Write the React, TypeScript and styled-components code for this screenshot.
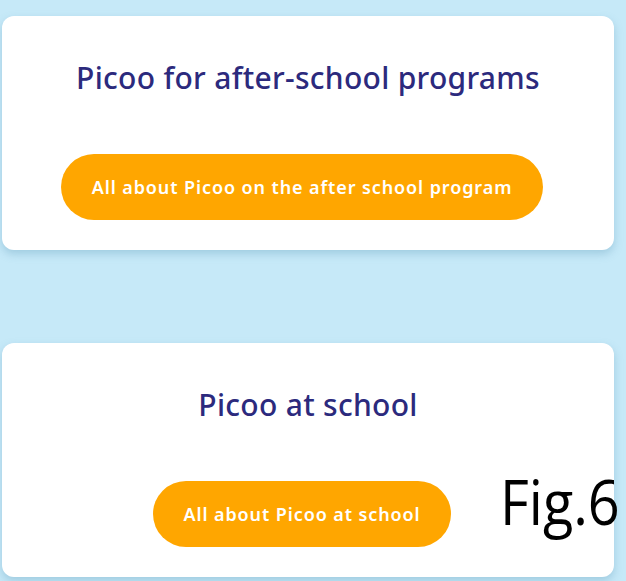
import React from "react";
import styled, { createGlobalStyle } from "styled-components";

const Global = createGlobalStyle`
  html, body { margin: 0; padding: 0; }
  body { background: #c6e9f8; font-family: "Noto Sans", sans-serif; }
`;

const Page = styled.div`
  width: 626px;
  height: 581px;
  padding: 16px 12px 0 2px;
  box-sizing: border-box;
  display: flex;
  flex-direction: column;
  gap: 93px;
  overflow: hidden;
`;

const Card = styled.section`
  position: relative;
  height: 234px;
  background: #ffffff;
  border-radius: 12px;
  box-shadow: 0 4px 8px rgba(90, 150, 180, 0.35);
  display: flex;
  flex-direction: column;
  align-items: center;
  box-sizing: border-box;
  padding-top: 43px;
`;

const Title = styled.h2`
  margin: 0;
  font-family: "Noto Sans", sans-serif;
  font-weight: 500;
  font-size: 30px;
  letter-spacing: 0.3px;
  line-height: 38px;
  color: #2c2a7d;
`;

const Button = styled.a<{ $w: number }>`
  margin-top: 57px;
  margin-right: 12px;
  width: ${(p) => p.$w}px;
  height: 66px;
  border-radius: 33px;
  background: #ffa600;
  color: #ffffff;
  display: flex;
  align-items: center;
  justify-content: center;
  font-family: "Noto Sans", sans-serif;
  font-weight: 600;
  font-size: 18px;
  letter-spacing: 0.9px;
  text-decoration: none;
`;

const Fig = styled.div`
  position: absolute;
  left: 498px;
  top: 121px;
  font-family: "Open Sans", sans-serif;
  font-size: 62px;
  color: #000;
  line-height: 1.2;
  transform: scaleX(0.9);
  transform-origin: left top;
  white-space: nowrap;
`;

export default function App() {
  return (
    <>
      <Global />
      <Page>
        <Card>
          <Title>Picoo for after-school programs</Title>
          <Button $w={482}>All about Picoo on the after school program</Button>
        </Card>
        <Card>
          <Title>Picoo at school</Title>
          <Button $w={298}>All about Picoo at school</Button>
          <Fig>Fig.6</Fig>
        </Card>
      </Page>
    </>
  );
}
